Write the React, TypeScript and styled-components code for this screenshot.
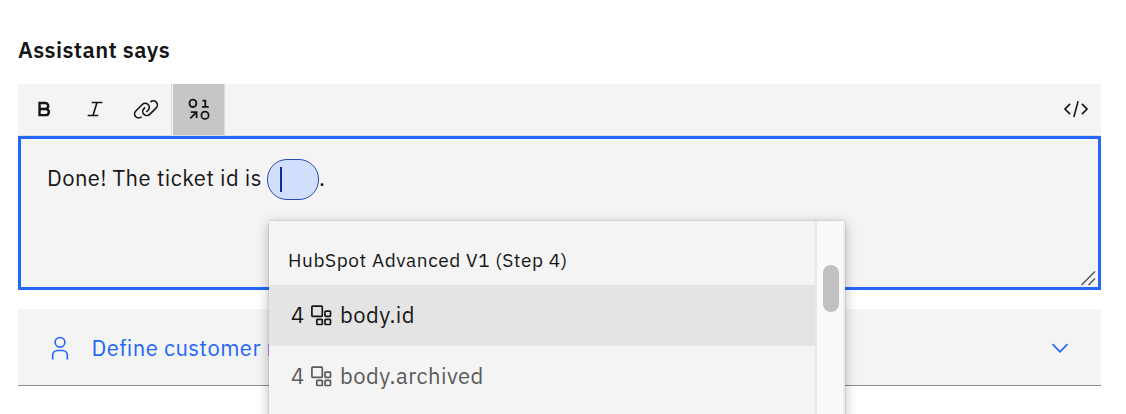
import React from "react";
import styled, { createGlobalStyle } from "styled-components";

const GlobalStyle = createGlobalStyle`
  * { box-sizing: border-box; }
  html, body { margin: 0; height: 414px; overflow: hidden; background: #fff; }
  body { font-family: "IBM Plex Sans", Roboto, sans-serif; color: #161616; }
`;

const Page = styled.main`
  width: 1126px;
  height: 414px;
  padding: 36px 25px 0 18px;
  overflow: hidden;
`;

const Title = styled.h2`
  margin: 0 0 20px;
  font-size: 22px;
  line-height: 28px;
  font-weight: 600;
  letter-spacing: 0.45px;
  white-space: nowrap;
`;

const Toolbar = styled.div`
  display: flex;
  height: 52px;
  background: #f4f4f4;
  border-bottom: 1px solid #e0e0e0;
`;

const ToolButton = styled.button<{ $active?: boolean }>`
  display: flex;
  align-items: center;
  justify-content: center;
  width: 51px;
  height: 51px;
  padding: 0 0 1px;
  border: 0;
  color: #161616;
  background: ${(p) => (p.$active ? "#c6c6c6" : "transparent")};
`;

const Divider = styled.span`
  width: 2px;
  height: 51px;
  border-left: 1px solid #dcdcdc;
`;

const Spacer = styled.span`
  flex: 1;
`;

const Editor = styled.div`
  position: relative;
  height: 154px;
  padding: 20px 26px;
  border: 3px solid #2467f6;
  background: #f4f4f4;
`;

const Message = styled.p`
  display: flex;
  align-items: center;
  height: 41px;
  margin: 0;
  font-size: 22px;
  line-height: 38px;
  white-space: nowrap;
`;

const MessageText = styled.span`
  width: 220px;
  height: 41px;
  letter-spacing: 0.42px;
`;

const MessageEnd = styled.span`
  height: 41px;
`;

const VariablePill = styled.span`
  display: flex;
  align-items: center;
  width: 52px;
  height: 41px;
  padding-left: 12px;
  border: 1px solid #2c4aaf;
  border-radius: 20px;
  background: #d2dffc;
`;

const Caret = styled.span`
  width: 2px;
  height: 25px;
  background: #0a318f;
`;

const ResizeGrip = styled.svg`
  position: absolute;
  right: 2px;
  bottom: 1px;
`;

const ResponsePanel = styled.button`
  display: flex;
  align-items: center;
  width: 100%;
  height: 77px;
  margin-top: 19px;
  padding: 2px 28px 0 28.5px;
  border: 0;
  border-bottom: 1px solid #8d8d8d;
  background: #f4f4f4;
  color: #2467f6;
  font: inherit;
  font-size: 22px;
`;

const PanelLabel = styled.span`
  margin-left: 19px;
  padding-bottom: 2px;
  white-space: nowrap;
  letter-spacing: 0.45px;
`;

const Menu = styled.div`
  position: absolute;
  top: 221px;
  left: 269px;
  z-index: 2;
  display: flex;
  width: 576px;
  height: 210px;
  background: #f4f4f4;
  box-shadow: 0 0 2px rgba(0, 0, 0, 0.2), 0 3px 12px rgba(0, 0, 0, 0.28);
`;

const Options = styled.div`
  width: 546px;
`;

const GroupTitle = styled.div`
  height: 64px;
  padding: 25px 0 0 19px;
  font-size: 19px;
  line-height: 28px;
  letter-spacing: 0.6px;
  white-space: nowrap;
`;

const Option = styled.div<{ $selected?: boolean }>`
  display: flex;
  align-items: center;
  height: 61px;
  padding-left: 22px;
  font-size: 22px;
  background: ${(p) => (p.$selected ? "#e4e4e4" : "#f4f4f4")};
  color: ${(p) => (p.$selected ? "#161616" : "#5a5a5a")};
`;

const StepNumber = styled.span`
  width: 20px;
  padding-bottom: 2px;
`;

const OptionName = styled.span`
  margin-left: 8px;
  padding-bottom: 2px;
  letter-spacing: 0.45px;
`;

const ScrollTrack = styled.div`
  width: 30px;
  padding: 44px 0 0 6px;
  border-left: 2px solid #e8e8e8;
  border-right: 2px solid #ededed;
  background: #fafafa;
`;

const ScrollThumb = styled.div`
  width: 16px;
  height: 47px;
  border-radius: 8px;
  background: #c1c1c1;
`;

function Icon({ paths }: { paths: string[] }) {
  return (
    <svg width="26" height="26" viewBox="0 0 32 32" fill="currentColor">
      {paths.map((d) => (
        <path key={d} d={d} />
      ))}
    </svg>
  );
}

const icons = {
  bold: [
    "M18.25,25H9V7h8.5a5.25,5.25,0,0,1,4,8.65A5.25,5.25,0,0,1,18.25,25ZM12,22h6.23a2.25,2.25,0,1,0,0-4.5H12Zm0-7.5h5.5a2.25,2.25,0,1,0,0-4.5H12Z",
  ],
  italic: ["M25 9V7H12v2h5.14l-4.37 14H7v2h13v-2h-5.14l4.37-14H25z"],
  link: [
    "M29.25,6.76a6,6,0,0,0-8.5,0l1.42,1.42a4,4,0,1,1,5.67,5.67l-8,8a4,4,0,1,1-5.67-5.66l1.41-1.42-1.41-1.42-1.42,1.42a6,6,0,0,0,0,8.5A6,6,0,0,0,17,25a6,6,0,0,0,4.27-1.76l8-8A6,6,0,0,0,29.25,6.76Z",
    "M4.19,24.82a4,4,0,0,1,0-5.67l8-8a4,4,0,0,1,5.67,0A3.94,3.94,0,0,1,19,14a4,4,0,0,1-1.17,2.85L15.71,19l1.42,1.42,2.12-2.12a6,6,0,0,0-8.51-8.51l-8,8a6,6,0,0,0,0,8.51A6,6,0,0,0,7,28a6.07,6.07,0,0,0,4.28-1.76L9.86,24.82A4,4,0,0,1,4.19,24.82Z",
  ],
  code: [
    "M31 16l-7 7-1.41-1.41L28.17 16l-5.58-5.59L24 9l7 7zM1 16l7-7 1.41 1.41L3.83 16l5.58 5.59L8 23l-7-7zM12.42 25.484L17.64 6l1.932.517L14.352 26z",
  ],
  user: [
    "M16 4a5 5 0 1 1-5 5 5 5 0 0 1 5-5m0-2a7 7 0 1 0 7 7A7 7 0 0 0 16 2z",
    "M26 30H24V25a5 5 0 0 0-5-5H13a5 5 0 0 0-5 5v5H6V25a7 7 0 0 1 7-7h6a7 7 0 0 1 7 7z",
  ],
  chevron: ["M16 22L6 12l1.4-1.4 8.6 8.6 8.6-8.6L26 12z"],
};

function VariableIcon() {
  return (
    <svg width="26" height="26" viewBox="0 0 26 26" fill="none" stroke="currentColor" strokeWidth="1.8">
      <rect x="3.5" y="3.6" width="6.8" height="7.4" rx="3.3" />
      <path d="M16.4 4.7h2.9v6.2M15.9 10.9h6.8" />
      <path d="M4.3 22.3l6-6M4.8 16.2h5.8v5.8" />
      <rect x="15.4" y="15.6" width="7.2" height="7.3" rx="3.5" />
    </svg>
  );
}

function BlocksIcon() {
  return (
    <svg width="21" height="21" viewBox="0 0 21 21" fill="none" stroke="currentColor" strokeWidth="1.7">
      <rect x="0.9" y="1.1" width="10.4" height="10.2" rx="0.7" />
      <rect x="14" y="6.1" width="5.5" height="5.2" rx="0.7" />
      <rect x="5.8" y="14.3" width="5.5" height="5.2" rx="0.7" />
      <rect x="14" y="14.3" width="5.5" height="5.2" rx="0.7" />
    </svg>
  );
}

export default function App() {
  return (
    <Page>
      <GlobalStyle />
      <Title>Assistant says</Title>
      <Toolbar>
        <ToolButton aria-label="Bold"><Icon paths={icons.bold} /></ToolButton>
        <ToolButton aria-label="Italic"><Icon paths={icons.italic} /></ToolButton>
        <ToolButton aria-label="Link"><Icon paths={icons.link} /></ToolButton>
        <Divider />
        <ToolButton aria-label="Insert variable" $active><VariableIcon /></ToolButton>
        <Divider />
        <Spacer />
        <ToolButton aria-label="Source"><Icon paths={icons.code} /></ToolButton>
      </Toolbar>
      <Editor>
        <Message>
          <MessageText>Done! The ticket id is</MessageText>
          <VariablePill><Caret /></VariablePill>
          <MessageEnd>.</MessageEnd>
        </Message>
        <ResizeGrip width="16" height="16" viewBox="0 0 16 16" stroke="#555" strokeWidth="1.5">
          <path d="M1.5 15L15 1.5M8.5 15l6.5-6.5" />
        </ResizeGrip>
      </Editor>
      <ResponsePanel>
        <Icon paths={icons.user} />
        <PanelLabel>Define customer response</PanelLabel>
        <Spacer />
        <Icon paths={icons.chevron} />
      </ResponsePanel>
      <Menu>
        <Options>
          <GroupTitle>HubSpot Advanced V1 (Step 4)</GroupTitle>
          <Option $selected>
            <StepNumber>4</StepNumber>
            <BlocksIcon />
            <OptionName>body.id</OptionName>
          </Option>
          <Option>
            <StepNumber>4</StepNumber>
            <BlocksIcon />
            <OptionName>body.archived</OptionName>
          </Option>
        </Options>
        <ScrollTrack><ScrollThumb /></ScrollTrack>
      </Menu>
    </Page>
  );
}
